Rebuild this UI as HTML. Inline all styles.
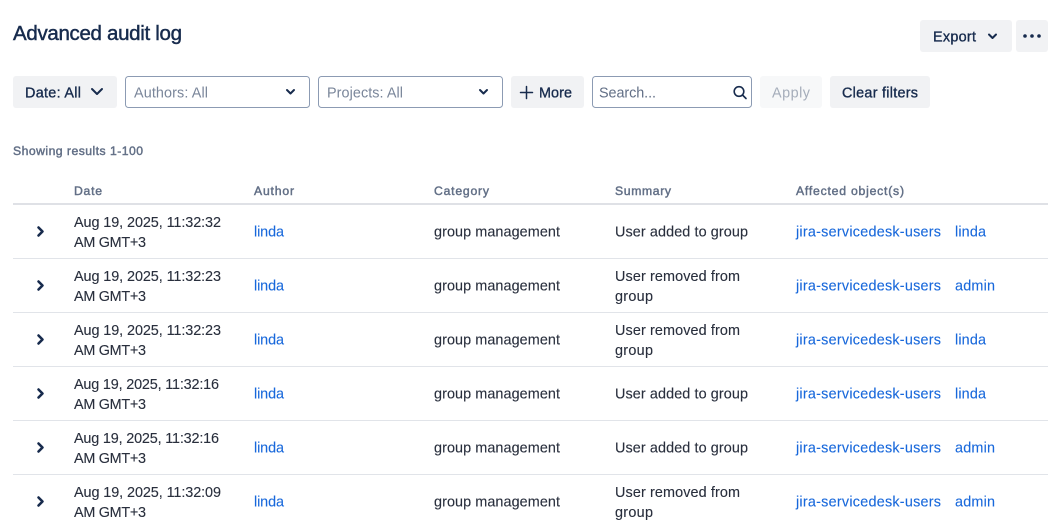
<!DOCTYPE html>
<html lang="en"><head><meta charset="utf-8"><title>Advanced audit log</title>
<style>
html,body{margin:0;padding:0;background:#fff;width:1057px;height:526px;overflow:hidden}
svg{display:block;font-family:"Liberation Sans",sans-serif}
text{font-size:14.4px;fill:#292f3d;stroke:#292f3d;stroke-width:.12px}
.b{fill:#172b4d;stroke:#172b4d;stroke-width:.35px}
.h{font-size:12.2px;fill:#626f86;stroke:#626f86;stroke-width:.45px}
.l{fill:#1868db;stroke:#1868db;stroke-width:.1px}
.p{fill:#7a869a;stroke:none}
.i{fill:none;stroke:#172b4d;stroke-width:2;stroke-linecap:round;stroke-linejoin:round}
.ex{fill:none;stroke:#172b4d;stroke-width:2.6;stroke-linecap:round;stroke-linejoin:round}
</style></head><body>
<svg width="1057" height="526" viewBox="0 0 1057 526" xmlns="http://www.w3.org/2000/svg">
<text x="13" y="40" class="b" style="font-size:20.500px;stroke-width:.45px" textLength="169" lengthAdjust="spacing">Advanced audit log</text>

<rect x="920" y="20" width="92" height="32" rx="3" fill="#f1f2f4"/>
<text x="933" y="41.500" class="b" textLength="43">Export</text>
<path class="i" d="M989 34.500l3.500 3.500 3.500-3.500"/>
<rect x="1016" y="20" width="32" height="32" rx="3" fill="#f1f2f4"/>
<circle cx="1025" cy="36" r="1.800" fill="#172b4d"/><circle cx="1032" cy="36" r="1.800" fill="#172b4d"/><circle cx="1039" cy="36" r="1.800" fill="#172b4d"/>

<rect x="13" y="76" width="104" height="32" rx="3" fill="#f1f2f4"/>
<text x="25" y="97.500" class="b" textLength="56">Date: All</text>
<path class="i" d="M92 89l5 5 5-5"/>

<rect x="125.500" y="76.500" width="184" height="31" rx="3" fill="#fff" stroke="#8c9bb3"/>
<text x="134" y="97.500" class="p" textLength="74">Authors: All</text>
<path class="i" d="M287 90l3.500 3.500 3.500-3.500"/>

<rect x="318.500" y="76.500" width="184" height="31" rx="3" fill="#fff" stroke="#8c9bb3"/>
<text x="327" y="97.500" class="p" textLength="76">Projects: All</text>
<path class="i" d="M480 90l3.500 3.500 3.500-3.500"/>

<rect x="511" y="76" width="73" height="32" rx="3" fill="#f1f2f4"/>
<path d="M526.500 86.500v12M520.500 92.500h12" fill="none" stroke="#172b4d" stroke-width="1.500" stroke-linecap="round"/>
<text x="539" y="97.500" class="b" textLength="33">More</text>

<rect x="592.500" y="76.500" width="159" height="31" rx="3" fill="#fff" stroke="#8c9bb3"/>
<text x="599" y="97.500" class="p" style="fill:#626f86" textLength="57">Search...</text>
<circle cx="739" cy="91.500" r="4.800" fill="none" stroke="#172b4d" stroke-width="1.600"/>
<path d="M742.500 95l3.500 3.500" fill="none" stroke="#172b4d" stroke-width="1.600" stroke-linecap="round"/>

<rect x="760" y="76" width="62" height="32" rx="3" fill="#f7f8f9"/>
<text x="772" y="97.500" style="fill:#a5adba;stroke:none" textLength="38">Apply</text>

<rect x="830" y="76" width="100" height="32" rx="3" fill="#f1f2f4"/>
<text x="842" y="97.500" class="b" textLength="76">Clear filters</text>

<text x="13" y="155" class="h" textLength="130">Showing results 1-100</text>

<text x="74" y="195" class="h" textLength="28">Date</text>
<text x="254" y="195" class="h" textLength="40">Author</text>
<text x="434" y="195" class="h" textLength="55">Category</text>
<text x="615" y="195" class="h" textLength="56">Summary</text>
<text x="796" y="195" class="h" textLength="108">Affected object(s)</text>
<rect x="13" y="203" width="1035" height="2" fill="#dfe1e6"/>

<rect x="13" y="258" width="1035" height="1" fill="#e1e4e9"/>
<rect x="13" y="312" width="1035" height="1" fill="#e1e4e9"/>
<rect x="13" y="366" width="1035" height="1" fill="#e1e4e9"/>
<rect x="13" y="420" width="1035" height="1" fill="#e1e4e9"/>
<rect x="13" y="474" width="1035" height="1" fill="#e1e4e9"/>

<!-- row 1 -->
<path class="ex" d="M38.500 227.500l4 4-4 4"/>
<text x="74" y="227" textLength="147">Aug 19, 2025, 11:32:32</text>
<text x="74" y="247" textLength="72">AM GMT+3</text>
<text x="254" y="236.500" class="l" textLength="30">linda</text>
<text x="434" y="236.500" textLength="126">group management</text>
<text x="615" y="236.500" textLength="133">User added to group</text>
<text x="796" y="236.500" class="l" textLength="145">jira-servicedesk-users</text>
<text x="955" y="236.500" class="l" textLength="31">linda</text>

<!-- row 2 -->
<path class="ex" d="M38.500 281.500l4 4-4 4"/>
<text x="74" y="281" textLength="147">Aug 19, 2025, 11:32:23</text>
<text x="74" y="301" textLength="72">AM GMT+3</text>
<text x="254" y="290.500" class="l" textLength="30">linda</text>
<text x="434" y="290.500" textLength="126">group management</text>
<text x="615" y="281" textLength="125">User removed from</text>
<text x="615" y="301" textLength="38">group</text>
<text x="796" y="290.500" class="l" textLength="145">jira-servicedesk-users</text>
<text x="955" y="290.500" class="l" textLength="40">admin</text>

<!-- row 3 -->
<path class="ex" d="M38.500 335.500l4 4-4 4"/>
<text x="74" y="335" textLength="147">Aug 19, 2025, 11:32:23</text>
<text x="74" y="355" textLength="72">AM GMT+3</text>
<text x="254" y="344.500" class="l" textLength="30">linda</text>
<text x="434" y="344.500" textLength="126">group management</text>
<text x="615" y="335" textLength="125">User removed from</text>
<text x="615" y="355" textLength="38">group</text>
<text x="796" y="344.500" class="l" textLength="145">jira-servicedesk-users</text>
<text x="955" y="344.500" class="l" textLength="31">linda</text>

<!-- row 4 -->
<path class="ex" d="M38.500 389.500l4 4-4 4"/>
<text x="74" y="389" textLength="145">Aug 19, 2025, 11:32:16</text>
<text x="74" y="409" textLength="72">AM GMT+3</text>
<text x="254" y="398.500" class="l" textLength="30">linda</text>
<text x="434" y="398.500" textLength="126">group management</text>
<text x="615" y="398.500" textLength="133">User added to group</text>
<text x="796" y="398.500" class="l" textLength="145">jira-servicedesk-users</text>
<text x="955" y="398.500" class="l" textLength="31">linda</text>

<!-- row 5 -->
<path class="ex" d="M38.500 443.500l4 4-4 4"/>
<text x="74" y="443" textLength="145">Aug 19, 2025, 11:32:16</text>
<text x="74" y="463" textLength="72">AM GMT+3</text>
<text x="254" y="452.500" class="l" textLength="30">linda</text>
<text x="434" y="452.500" textLength="126">group management</text>
<text x="615" y="452.500" textLength="133">User added to group</text>
<text x="796" y="452.500" class="l" textLength="145">jira-servicedesk-users</text>
<text x="955" y="452.500" class="l" textLength="40">admin</text>

<!-- row 6 -->
<path class="ex" d="M38.500 497.500l4 4-4 4"/>
<text x="74" y="497" textLength="147">Aug 19, 2025, 11:32:09</text>
<text x="74" y="517" textLength="72">AM GMT+3</text>
<text x="254" y="506.500" class="l" textLength="30">linda</text>
<text x="434" y="506.500" textLength="126">group management</text>
<text x="615" y="497" textLength="125">User removed from</text>
<text x="615" y="517" textLength="38">group</text>
<text x="796" y="506.500" class="l" textLength="145">jira-servicedesk-users</text>
<text x="955" y="506.500" class="l" textLength="40">admin</text>
</svg>
</body></html>
